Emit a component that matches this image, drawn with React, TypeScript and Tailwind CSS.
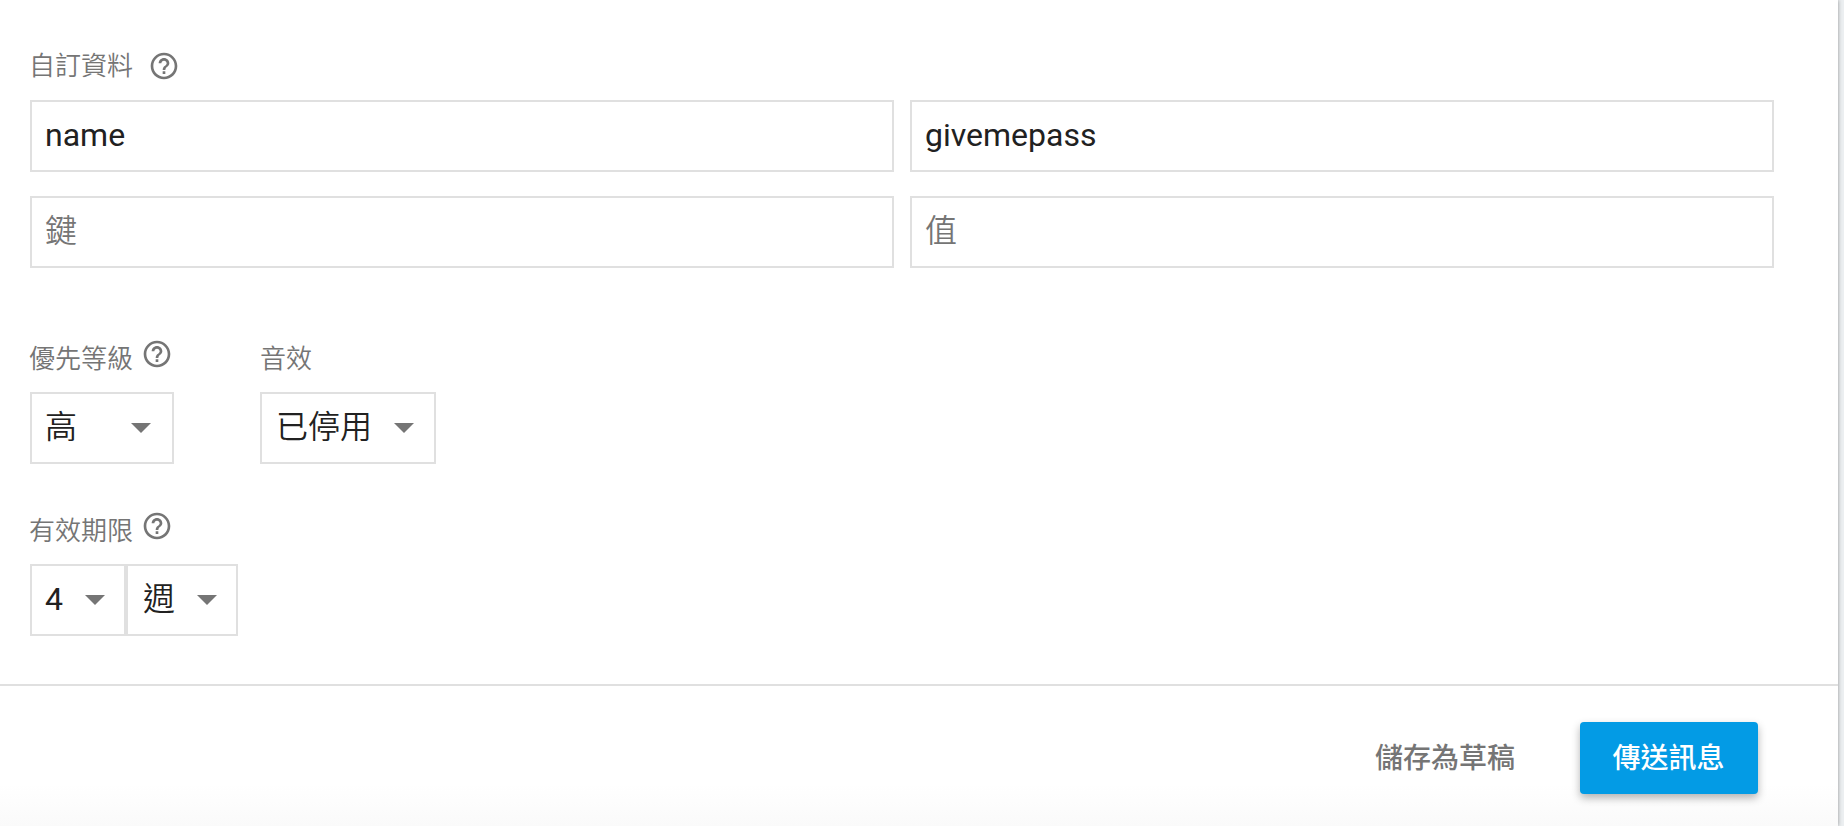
import type { ReactNode } from 'react';

function HelpIcon({ className = '' }: { className?: string }) {
  return (
    <svg viewBox="0 0 24 24" className={`size-8 shrink-0 fill-[#757575] ${className}`} aria-hidden="true">
      <path d="M11 18h2v-2h-2v2zm1-16C6.480 2 2 6.480 2 12s4.480 10 10 10 10-4.480 10-10S17.520 2 12 2zm0 18c-4.410 0-8-3.590-8-8s3.590-8 8-8 8 3.590 8 8-3.590 8-8 8zm0-14c-2.210 0-4 1.790-4 4h2c0-1.100.9-2 2-2s2 .9 2 2c0 2-3 1.750-3 5h2c0-2.250 3-2.500 3-5 0-2.210-1.790-4-4-4z" />
    </svg>
  );
}

function Select({ value, className }: { value: string; className: string }) {
  return (
    <button
      type="button"
      className={`flex h-[72px] items-center justify-between border-2 border-[#e0e0e0] bg-white text-[32px] leading-10 text-[#212121] ${className}`}
    >
      <span className="-mt-[3px] whitespace-nowrap">{value}</span>
      <svg viewBox="0 0 20 10" className="h-2.5 w-5 shrink-0 fill-[#757575]" aria-hidden="true">
        <path d="M0 0h20L10 10z" />
      </svg>
    </button>
  );
}

function Label({ children, className = '' }: { children: ReactNode; className?: string }) {
  return <span className={`text-[26px] font-[350] leading-8 text-[#757575] ${className}`}>{children}</span>;
}

function Field({ value, placeholder }: { value?: string; placeholder?: string }) {
  return (
    <input
      defaultValue={value}
      placeholder={placeholder}
      className="h-[72px] w-full border-2 border-[#e0e0e0] bg-white px-[13px] pb-0.5 text-[32px] leading-10 text-[#212121] outline-none placeholder:font-[350] placeholder:text-[#757575]"
    />
  );
}

export default function App() {
  return (
    <div className="flex h-[826px] w-[1844px] overflow-hidden bg-[#eceff1] font-[Roboto,'Noto_Sans_CJK_TC',sans-serif]">
      <main className="flex w-[1838px] flex-col bg-white shadow-[0_0_4px_rgba(0,0,0,0.4)]">
        <section className="flex h-[684px] flex-col pl-[30px] pr-16 pt-[50px]">
          <div className="flex h-[50px] items-start">
            <Label className="-ml-px">自訂資料</Label>
            <HelpIcon className="ml-[14.5px]" />
          </div>
          <div className="grid grid-cols-2 gap-x-4 gap-y-6">
            <Field value="name" />
            <Field value="givemepass" />
            <Field placeholder="鍵" />
            <Field placeholder="值" />
          </div>
          <div className="mt-[70px] flex">
            <div className="w-[230px]">
              <div className="flex h-[54px]">
                <Label className="-ml-px mt-[5px]">優先等級</Label>
                <HelpIcon className="ml-2" />
              </div>
              <Select value="高" className="w-36 pl-[13px] pr-[21px] font-[350]" />
            </div>
            <div>
              <div className="flex h-[54px]">
                <Label className="mt-[5px]">音效</Label>
              </div>
              <Select value="已停用" className="w-44 pl-3.5 pr-5 font-[350]" />
            </div>
          </div>
          <div className="mt-[46px]">
            <div className="flex h-[54px]">
              <Label className="-ml-px mt-[5px]">有效期限</Label>
              <HelpIcon className="ml-2" />
            </div>
            <div className="flex">
              <Select value="4" className="w-24 pl-[13px] pr-[19px]" />
              <Select value="週" className="w-28 pl-[15px] pr-[19px] font-[350]" />
            </div>
          </div>
        </section>
        <footer className="flex flex-1 items-start justify-end border-t-2 border-[#e0e0e0] bg-linear-to-b from-white from-70% to-[#fafafa] pr-20 pt-9 text-[28px] font-medium leading-10">
          <button type="button" className="h-[72px] px-[33px] pt-0.5 text-[#757575]">儲存為草稿</button>
          <button
            type="button"
            className="ml-8 h-[72px] w-[178px] rounded-[4px] bg-[#039be5] pr-px pt-0.5 text-white shadow-[0_4px_8px_rgba(0,0,0,0.3)]"
          >
            傳送訊息
          </button>
        </footer>
      </main>
    </div>
  );
}
